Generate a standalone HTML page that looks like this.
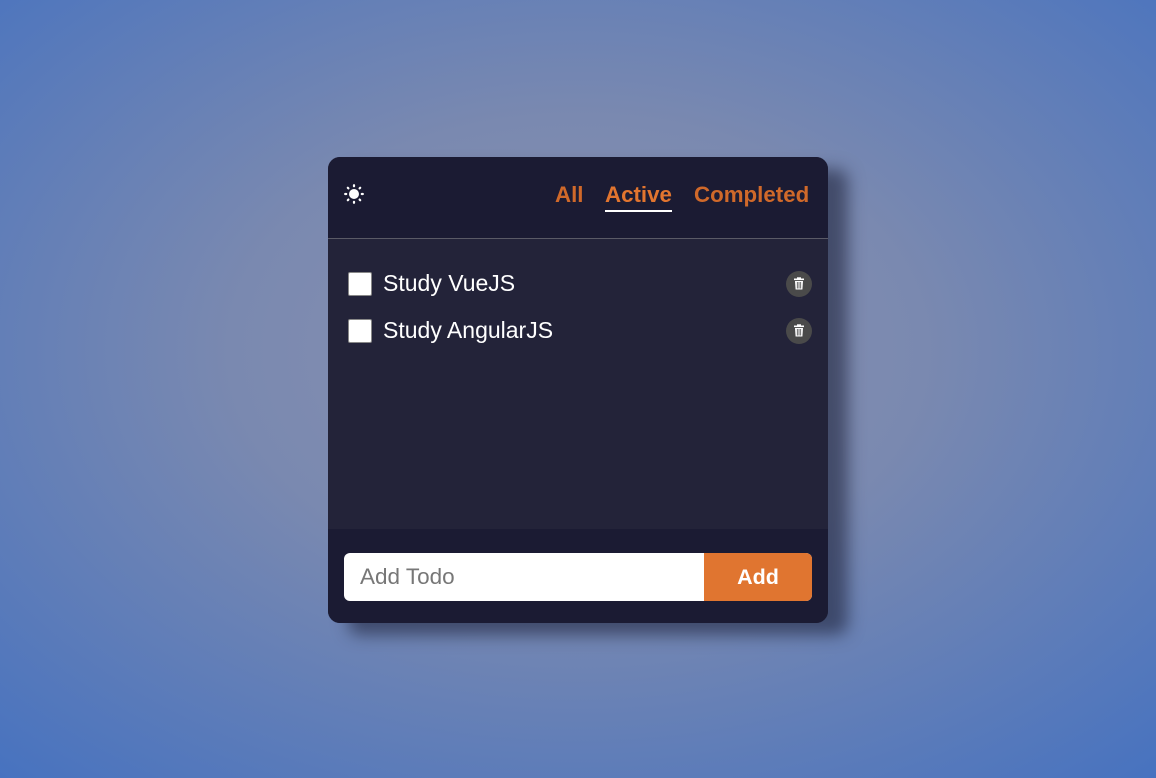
<!DOCTYPE html>
<html><head><style>
*{margin:0;padding:0;box-sizing:border-box}
html,body{width:1156px;height:778px;overflow:hidden}
body{background:radial-gradient(ellipse 75% 75% at 50% 45%,#8a91ae 0%,#7a89b0 40%,#4672c0 100%);font-family:"Liberation Sans",sans-serif;position:relative}
.card{position:absolute;left:328px;top:157px;width:500px;height:466px;border-radius:12px;background:#232339;overflow:hidden;box-shadow:20px 12px 16px rgba(30,35,60,.6)}
.hd{height:82px;background:#1b1b33;border-bottom:1px solid #5a5a66;position:relative}
.tab{position:absolute;top:25px;font-weight:bold;font-size:22.3px;color:#d0692a}
.act{color:#e2752f}
.ul{position:absolute;left:277px;top:53px;width:67px;height:2px;background:#fff}
.item{position:absolute;left:20px;height:24px;width:464px}
.cb{position:absolute;left:0;top:0;width:24px;height:24px;background:#fff;border-radius:2px;border:1px solid #888}
.tx{position:absolute;left:35px;top:-2px;font-size:23px;color:#fff}
.tr{position:absolute;left:438px;top:-1px;width:26px;height:26px;border-radius:50%;background:#4a4a4a}
.ft{position:absolute;left:0;top:372px;width:500px;height:94px;background:#1b1b33}
.in{position:absolute;left:16px;top:24px;width:468px;height:48px;background:#fff;border-radius:6px;overflow:hidden}
.ph{position:absolute;left:16px;top:11px;font-size:22.5px;color:#777}
.btn{position:absolute;right:0;top:0;width:108px;height:48px;background:#e07530;color:#fff;font-weight:bold;font-size:21.5px;text-align:center;line-height:48px}
</style></head><body>
<div class="card">
 <div class="hd">
  <svg style="position:absolute;left:16px;top:27px" width="20" height="20" viewBox="0 0 20 20"><circle cx="10" cy="10" r="5" fill="#fff"/><g stroke="#fff" stroke-width="2.2" stroke-linecap="round"><line x1="10" y1="1.2" x2="10" y2="2.2"/><line x1="10" y1="17.8" x2="10" y2="18.8"/><line x1="1.2" y1="10" x2="2.2" y2="10"/><line x1="17.8" y1="10" x2="18.8" y2="10"/><line x1="3.8" y1="3.8" x2="4.4" y2="4.4"/><line x1="15.6" y1="15.6" x2="16.2" y2="16.2"/><line x1="3.8" y1="16.2" x2="4.4" y2="15.6"/><line x1="15.6" y1="4.4" x2="16.2" y2="3.8"/></g></svg>
  <div class="tab" style="left:227px">All</div>
  <div class="tab act" style="left:277px">Active</div>
  <div class="tab" style="left:366px">Completed</div>
  <div class="ul"></div>
 </div>
 <div class="item" style="top:115px"><div class="cb"></div><div class="tx">Study VueJS</div><div class="tr"><svg width="26" height="26" viewBox="0 0 26 26"><rect x="8" y="7.5" width="10" height="1.6" fill="#fff"/><rect x="11" y="6.3" width="4" height="1.5" fill="#fff"/><path d="M9 10h8l-.6 8.5h-6.8z" fill="#fff"/><g stroke="#4a4a4a" stroke-width=".8"><line x1="11.3" y1="11" x2="11.3" y2="17.5"/><line x1="13" y1="11" x2="13" y2="17.5"/><line x1="14.7" y1="11" x2="14.7" y2="17.5"/></g></svg></div></div>
 <div class="item" style="top:162px"><div class="cb"></div><div class="tx">Study AngularJS</div><div class="tr"><svg width="26" height="26" viewBox="0 0 26 26"><rect x="8" y="7.5" width="10" height="1.6" fill="#fff"/><rect x="11" y="6.3" width="4" height="1.5" fill="#fff"/><path d="M9 10h8l-.6 8.5h-6.8z" fill="#fff"/><g stroke="#4a4a4a" stroke-width=".8"><line x1="11.3" y1="11" x2="11.3" y2="17.5"/><line x1="13" y1="11" x2="13" y2="17.5"/><line x1="14.7" y1="11" x2="14.7" y2="17.5"/></g></svg></div></div>
 <div class="ft"><div class="in"><div class="ph">Add Todo</div><div class="btn">Add</div></div></div>
</div>
</body></html>
